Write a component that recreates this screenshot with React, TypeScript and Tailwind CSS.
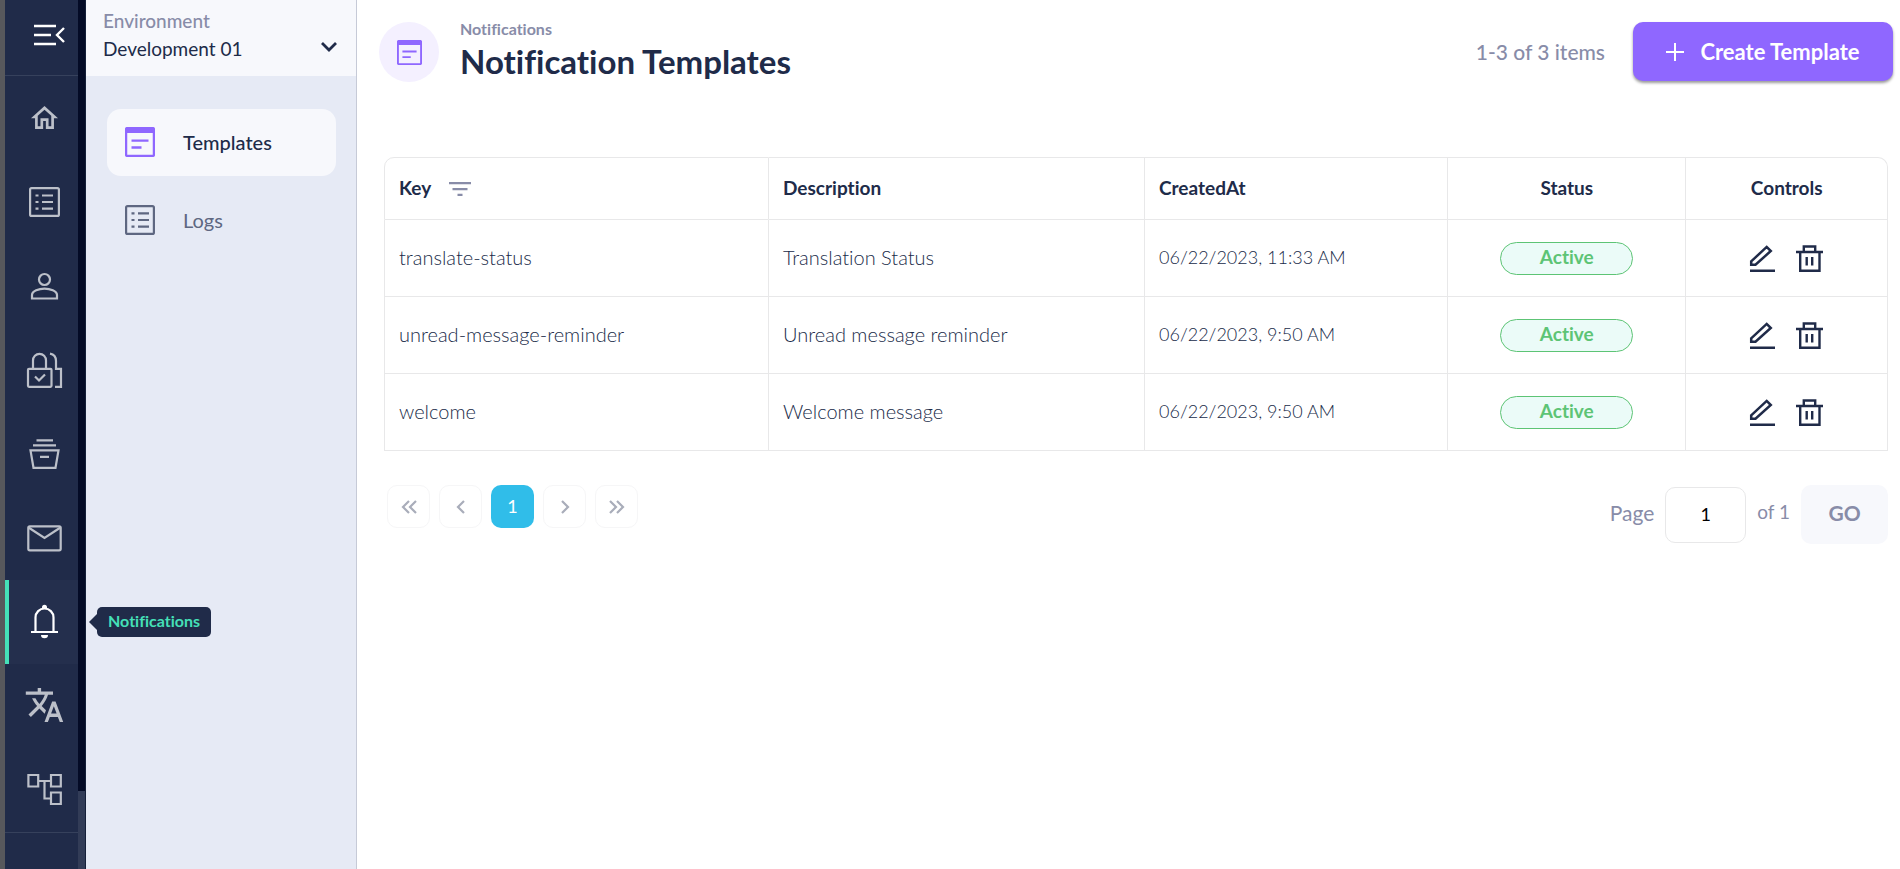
import type { ReactNode } from "react";

type IconProps = { className?: string };

function NavIcon({ children }: { children: ReactNode }) {
  return (
    <svg viewBox="0 0 39 40" fill="none" stroke="currentColor" strokeWidth="2.2" className="h-10 w-[39px]" aria-hidden="true">
      {children}
    </svg>
  );
}

const CollapseIcon = () => (
  <svg viewBox="0 0 32 24" fill="none" stroke="currentColor" strokeWidth="2.4" className="h-6 w-8" aria-hidden="true">
    <path d="M1 3h22M1 12h17M1 21h22M31 5l-7 7 7 7" />
  </svg>
);

const HomeIcon = () => (
  <NavIcon>
    <path
      transform="translate(3.3 4) scale(1.35)"
      fill="currentColor"
      stroke="none"
      d="M12 5.69l5 4.5V18h-2v-6H9v6H7v-7.81l5-4.5M12 3L2 12h3v8h6v-6h2v6h6v-8h3L12 3z"
    />
  </NavIcon>
);

const RecordsIcon = () => (
  <NavIcon>
    <rect x="5.1" y="6.1" width="28.8" height="27.8" rx="1.5" />
    <path d="M10.5 13.5h3M10.5 20h3M10.5 26.7h3M17 13.5h11M17 20h11M17 26.7h11" />
  </NavIcon>
);

const PersonIcon = () => (
  <NavIcon>
    <circle cx="19.5" cy="13.5" r="5.5" />
    <path d="M7 32.5h25V29c0-4-7-6.3-12.5-6.3S7 25 7 29z" />
  </NavIcon>
);

const LockIcon = () => (
  <NavIcon>
    <rect x="3" y="18.8" width="23.5" height="18" rx="1" />
    <path d="M8 18.8V10.5a6.5 6.7 0 0 1 13 0v8.3M10 26.5l4 4 6-6M25 3.7c4 .8 6 3.8 6 7.3v7.8h5V36.8h-6" />
  </NavIcon>
);

const ArchiveIcon = () => (
  <NavIcon>
    <path d="M11.5 6.3H28M8 11.3h23M5.5 16.4h28l-3 17.4h-22zM15 22.8h9" />
  </NavIcon>
);

const MailIcon = () => (
  <NavIcon>
    <rect x="3.3" y="8.3" width="32.4" height="24" rx="1.5" />
    <path d="M3.5 9.5l16 10.5 16-10.5" />
  </NavIcon>
);

const BellIcon = () => (
  <NavIcon>
    <path d="M6 30h27M10.5 30V15.5a9 9 0 0 1 18 0V30" />
    <path d="M17 7V5.3a2.5 2.5 0 0 1 5 0V7zM16 33h7a3.5 3.2 0 0 1-7 0z" fill="currentColor" stroke="none" />
  </NavIcon>
);

const TranslateIcon = () => (
  <NavIcon>
    <path
      transform="translate(-0.9 -1.4) scale(1.7)"
      fill="currentColor"
      stroke="none"
      d="M12.87 15.07l-2.54-2.51.03-.03c1.74-1.94 2.98-4.17 3.71-6.53H17V4h-7V2H8v2H1v1.99h11.17C11.5 7.92 10.44 9.75 9 11.35 8.07 10.32 7.3 9.19 6.69 8h-2c.73 1.63 1.73 3.17 2.98 4.56l-5.09 5.02L4 19l5-5 3.11 3.11.76-2.04zM18.5 10h-2L12 22h2l1.12-3h4.75L21 22h2l-4.5-12zm-2.62 7l1.62-4.33L19.12 17h-3.24z"
    />
  </NavIcon>
);

const TreeIcon = () => (
  <NavIcon>
    <path d="M3.4 5h9.8v11.5H3.4zM26 5h9.8v11.5H26zM26 22.5h9.8V34H26zM13.2 11H26M19.5 11v17.5H26" />
  </NavIcon>
);

const TemplateIcon = ({ className }: IconProps) => (
  <svg viewBox="0 0 30 30" fill="none" stroke="currentColor" strokeWidth="2.3" className={className} aria-hidden="true">
    <rect x="1.1" y="1.1" width="27.8" height="27.8" rx="1" />
    <path d="M1 3.5h28" strokeWidth="5" />
    <path d="M6.5 13.7h17M6.5 20.5h10" />
  </svg>
);

const LogsIcon = ({ className }: IconProps) => (
  <svg viewBox="0 0 30 30" fill="none" stroke="currentColor" strokeWidth="2.2" className={className} aria-hidden="true">
    <rect x="1.1" y="1.1" width="27.8" height="27.8" rx="1.5" />
    <path d="M6.5 8.3h3M6.5 15h3M6.5 21.7h3M13 8.3h11M13 15h11M13 21.7h11" />
  </svg>
);

const EditIcon = () => (
  <svg viewBox="0 0 28 28" fill="none" stroke="currentColor" strokeWidth="2.5" className="size-7" aria-hidden="true">
    <path d="M2.2 17.4L17.7 2.9l4.1 4.1L6.5 20.8H2.2zM1 26.7h25" />
  </svg>
);

const TrashIcon = () => (
  <svg viewBox="0 0 28 28" fill="none" stroke="currentColor" strokeWidth="2.4" className="size-7" aria-hidden="true">
    <path d="M1 8h27M8.8 8V2.5h11.4V8M5.2 8v18.8h19.3V8M11.7 13v8.5M17.2 13v8.5" />
  </svg>
);

const navItems = [
  { label: "Home", icon: <HomeIcon /> },
  { label: "Records", icon: <RecordsIcon /> },
  { label: "Users", icon: <PersonIcon /> },
  { label: "Permissions", icon: <LockIcon /> },
  { label: "Archive", icon: <ArchiveIcon /> },
  { label: "Mail", icon: <MailIcon /> },
  { label: "Notifications", icon: <BellIcon />, active: true },
  { label: "Translations", icon: <TranslateIcon /> },
  { label: "Workflows", icon: <TreeIcon /> },
];

const templates = [
  { key: "translate-status", description: "Translation Status", createdAt: "06/22/2023, 11:33 AM" },
  { key: "unread-message-reminder", description: "Unread message reminder", createdAt: "06/22/2023, 9:50 AM" },
  { key: "welcome", description: "Welcome message", createdAt: "06/22/2023, 9:50 AM" },
];

function Sidebar() {
  return (
    <aside className="flex shrink-0 border-l-[5px] border-[#57585c] bg-[#202b49]">
      <div className="w-[73px]">
        <button type="button" aria-label="Collapse menu" className="flex h-[76px] w-full items-center justify-center border-b border-[#36415c] pb-[6px] pl-[14px] text-white">
          <CollapseIcon />
        </button>
        <nav aria-label="Main" className="border-b border-[#36415c]">
          {navItems.map((item) => (
            <div key={item.label} className="relative">
              <a
                href="#"
                aria-label={item.label}
                className={
                  item.active
                    ? "flex h-[84px] items-center justify-center border-l-4 border-[#45e0b8] bg-[#242f4d] pl-[2px] text-white"
                    : "flex h-[84px] items-center justify-center border-l-4 border-transparent pl-[2px] text-[#bcc0c9]"
                }
              >
                {item.icon}
              </a>
              {item.active && (
                <div role="tooltip" className="absolute top-1/2 left-full z-10 ml-[11px] flex -translate-y-1/2 items-center">
                  <svg viewBox="0 0 8 16" className="h-4 w-2 fill-[#202b49]" aria-hidden="true">
                    <path d="M8 0v16L0 8z" />
                  </svg>
                  <span className="flex h-[30px] w-[114px] items-center justify-center rounded-[5px] bg-[#202b49] pb-[3px] text-base font-bold text-[#45e0b8]">
                    {item.label}
                  </span>
                </div>
              )}
            </div>
          ))}
        </nav>
      </div>
      <div className="flex w-2 flex-col border-r border-[#152039] bg-[#040b26]">
        <div className="mt-auto h-[9%] bg-[#323c57]" />
      </div>
    </aside>
  );
}

function SectionPanel() {
  return (
    <div className="w-[271px] shrink-0 border-r border-[#c6cad7] bg-[#e6eaf5]">
      <button type="button" className="flex h-[76px] w-full items-center justify-between bg-[#f7f8fc] pr-[19px] pb-[6px] pl-[17px] text-left">
        <span className="flex flex-col text-[19px] leading-7">
          <span className="font-medium text-[#888ca8]">Environment</span>
          <span className="text-[#202b49]">Development 01</span>
        </span>
        <svg viewBox="0 0 16 12" fill="none" stroke="#202b49" strokeWidth="2.8" className="mt-6 h-3 w-4" aria-hidden="true">
          <path d="M1 2l7 7 7-7" />
        </svg>
      </button>
      <nav aria-label="Notifications" className="flex flex-col gap-[11px] pt-[33px] pr-5 pl-[21px] text-xl">
        <a href="#" className="flex h-[67px] items-center gap-7 rounded-[14px] bg-[#f7f8fc] px-[18px] pb-[2px] font-medium text-[#202b49]">
          <TemplateIcon className="size-[30px] text-[#8f67ff]" />
          Templates
        </a>
        <a href="#" className="flex h-[67px] items-center gap-7 rounded-[14px] px-[18px] pb-[2px] text-[#5e6781]">
          <LogsIcon className="size-[30px]" />
          Logs
        </a>
      </nav>
    </div>
  );
}

function PageHeader() {
  return (
    <header className="flex items-start justify-between pr-[7px] pl-[22px]">
      <div className="flex items-start gap-[21px]">
        <span className="flex size-[60px] items-center justify-center rounded-full bg-[#f4f0ff]">
          <TemplateIcon className="size-[25px] text-[#8f67ff]" />
        </span>
        <div>
          <p className="text-base leading-[14px] font-bold text-[#888ca8]">Notifications</p>
          <h1 className="mt-[3px] text-[33px] leading-[44px] font-bold text-[#202b49]">Notification Templates</h1>
        </div>
      </div>
      <div className="flex items-center gap-7">
        <span className="text-[21px] font-medium text-[#888ca8]">1-3 of 3 items</span>
        <button type="button" className="flex h-[59px] w-[260px] items-center justify-center gap-4 rounded-[10px] bg-[#8f67ff] text-[22px] font-bold text-white shadow-[0_2px_3px_rgba(0,0,0,0.4)]">
          <svg viewBox="0 0 18 18" stroke="currentColor" strokeWidth="2" className="size-[18px]" aria-hidden="true">
            <path d="M9 0v18M0 9h18" />
          </svg>
          Create Template
        </button>
      </div>
    </header>
  );
}

function TemplatesTable() {
  const head = "h-[63px] border-t border-r border-b border-[#e8e8e9] px-[14px] text-[19px] font-bold";
  const cell = "h-[77px] border-r border-b border-[#e8e8e9] px-[14px]";
  return (
    <table className="w-full table-fixed border-separate border-spacing-0 text-left text-xl text-[#202b49]">
      <colgroup>
        <col className="w-[25.6%]" />
        <col className="w-[25%]" />
        <col className="w-[20.15%]" />
        <col className="w-[15.85%]" />
        <col className="w-[13.4%]" />
      </colgroup>
      <thead>
        <tr>
          <th scope="col" className={`${head} rounded-tl-[10px] border-l`}>
            <span className="flex items-center gap-[18px]">
              Key
              <button type="button" aria-label="Filter by key" className="text-[#888ca8]">
                <svg viewBox="0 0 22 14" stroke="currentColor" strokeWidth="2.2" className="h-[14px] w-[22px]" aria-hidden="true">
                  <path d="M0 1.2h22M3.5 7.2h15M8.5 12.9h5" />
                </svg>
              </button>
            </span>
          </th>
          <th scope="col" className={head}>Description</th>
          <th scope="col" className={head}>CreatedAt</th>
          <th scope="col" className={`${head} text-center`}>Status</th>
          <th scope="col" className={`${head} rounded-tr-[10px] text-center`}>Controls</th>
        </tr>
      </thead>
      <tbody>
        {templates.map((row) => (
          <tr key={row.key}>
            <td className={`${cell} border-l pb-[2px] font-light`}>{row.key}</td>
            <td className={`${cell} pb-[2px] font-light`}>{row.description}</td>
            <td className={`${cell} pb-[2px] text-lg font-light`}>{row.createdAt}</td>
            <td className={cell}>
              <span className="mx-auto flex h-[33px] w-[133px] items-center justify-center rounded-full border border-[#5dc475] bg-[#ebfbf8] pb-[2px] text-[19px] font-bold text-[#5dc475]">
                Active
              </span>
            </td>
            <td className={cell}>
              <span className="flex items-center justify-center gap-[18px] pr-[2px]">
                <button type="button" aria-label={`Edit ${row.key}`}>
                  <EditIcon />
                </button>
                <button type="button" aria-label={`Delete ${row.key}`}>
                  <TrashIcon />
                </button>
              </span>
            </td>
          </tr>
        ))}
      </tbody>
    </table>
  );
}

function PageButton({ label, path }: { label: string; path: string }) {
  return (
    <button type="button" aria-label={label} className="flex size-[43px] items-center justify-center rounded-[10px] border border-[#f6f6f7] text-[#a9adba]">
      <svg viewBox="0 0 16 14" fill="none" stroke="currentColor" strokeWidth="2.2" className="h-[14px] w-4" aria-hidden="true">
        <path d={path} />
      </svg>
    </button>
  );
}

function Pagination() {
  return (
    <div className="mt-[34px] flex items-start justify-between pl-[3px]">
      <nav aria-label="Pagination" className="flex gap-[9px]">
        <PageButton label="First page" path="M8 1L2 7l6 6M15 1L9 7l6 6" />
        <PageButton label="Previous page" path="M11 1L5 7l6 6" />
        <button type="button" aria-current="page" className="size-[43px] rounded-[10px] bg-[#30bde9] pb-[2px] text-lg text-white">
          1
        </button>
        <PageButton label="Next page" path="M5 1l6 6-6 6" />
        <PageButton label="Last page" path="M1 1l6 6-6 6M8 1l6 6-6 6" />
      </nav>
      <form className="flex items-center gap-[11px] text-[21px] text-[#888ca8]" onSubmit={(event) => event.preventDefault()}>
        <label htmlFor="page-number" className="pb-1">Page</label>
        <input
          id="page-number"
          type="text"
          defaultValue="1"
          className="h-14 w-[81px] rounded-[10px] border border-[#e8e8e9] pb-[2px] text-center text-lg text-black"
        />
        <span className="pb-1 text-[19px]">of 1</span>
        <button type="submit" className="h-[59px] w-[87px] rounded-[10px] bg-[#f7f8fc] pb-1 font-bold">
          GO
        </button>
      </form>
    </div>
  );
}

export default function App() {
  return (
    <div className="flex min-h-screen bg-white font-['Lato',sans-serif] [font-variant-ligatures:none]">
      <Sidebar />
      <SectionPanel />
      <main className="min-w-0 flex-1 pt-[22px]">
        <PageHeader />
        <section className="mt-[74px] pr-3 pl-[27px]">
          <TemplatesTable />
          <Pagination />
        </section>
      </main>
    </div>
  );
}
